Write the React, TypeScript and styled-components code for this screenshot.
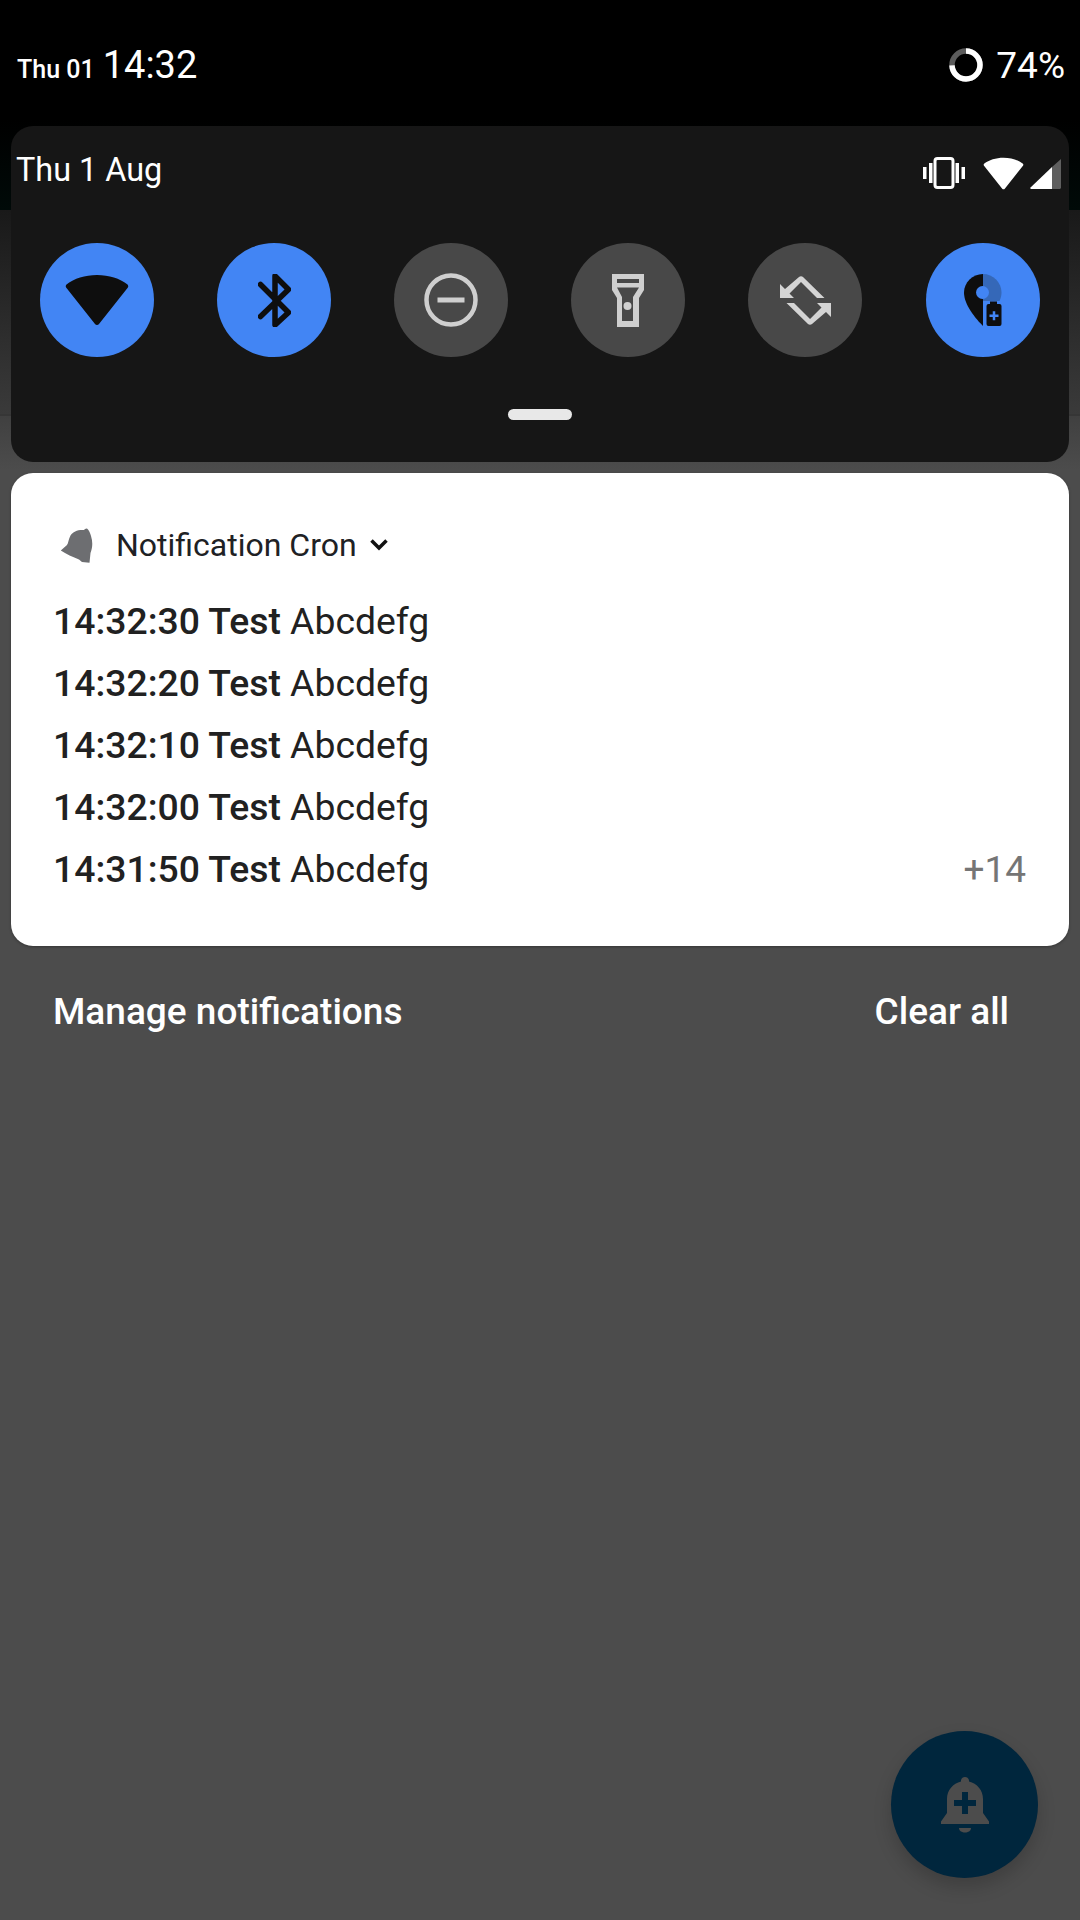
import { FC } from "react";
import styled, { createGlobalStyle } from "styled-components";

const GlobalStyle = createGlobalStyle`
  html, body {
    margin: 0;
    padding: 0;
    background: #4c4c4c;
  }
  * {
    box-sizing: border-box;
  }
`;

const Screen = styled.div`
  position: relative;
  width: 1080px;
  height: 1920px;
  overflow: hidden;
  font-family: Roboto, "Liberation Sans", sans-serif;
  background: linear-gradient(
    to bottom,
    #000 0,
    #000 120px,
    #000a08 210px,
    #191919 210px,
    #3a3a3a 414px,
    #363636 414px,
    #363636 416px,
    #404040 416px,
    #4c4c4c 470px
  );
`;

const StatusBar = styled.header`
  height: 126px;
  padding: 4px 15px 0 17px;
  display: flex;
  align-items: center;
  justify-content: space-between;
  color: #fff;
`;

const Clock = styled.div`
  display: flex;
  align-items: baseline;
  gap: 8px;
  font-size: 38px;
`;

const ClockDate = styled.span`
  font-size: 25px;
  font-weight: 500;
`;

const BatteryWrap = styled.div`
  display: flex;
  align-items: center;
  gap: 13px;
  font-size: 37px;
`;

const QuickPanel = styled.section`
  margin: 0 11px;
  height: 336px;
  background: #161616;
  border-radius: 22px;
  color: #fff;
  display: flex;
  flex-direction: column;
`;

const PanelTop = styled.div`
  height: 88px;
  padding: 0 8px 0 5px;
  display: flex;
  align-items: center;
  justify-content: space-between;
  font-size: 32.4px;
`;

const PanelIcons = styled.div`
  padding-top: 6px;
  display: flex;
  align-items: center;
  gap: 18px;
`;

const SignalIcon = styled.svg`
  margin-left: -12px;
`;

const TileRow = styled.div`
  margin-top: 29px;
  padding: 0 29px;
  display: flex;
  gap: 63px;
`;

const Tile = styled.div<{ $on?: boolean }>`
  width: 114px;
  height: 114px;
  border-radius: 50%;
  display: flex;
  align-items: center;
  justify-content: center;
  background: ${(p) => (p.$on ? "#4285f4" : "#484848")};

  &:last-child {
    margin-left: 1px;
  }
`;

const Handle = styled.div`
  width: 64px;
  height: 11px;
  margin: 52px auto 0;
  border-radius: 6px;
  background: #e8e8e8;
`;

const NotifCard = styled.section`
  margin: 11px 11px 0;
  height: 473px;
  background: #fff;
  border-radius: 22px;
  padding: 36px 43px 0 42px;
  box-shadow: 0 1px 3px rgba(0, 0, 0, 0.3);
`;

const AppRow = styled.div`
  height: 72px;
  display: flex;
  align-items: center;
  color: #202124;
  font-size: 32px;
`;

const AppIcon = styled.svg`
  margin-left: 7px;
  margin-right: 23px;
  display: block;
`;

const Chevron = styled.svg`
  margin-left: 13px;
  display: block;
`;

const MessageList = styled.div`
  margin-top: 9px;
  display: flex;
  flex-direction: column;
`;

const MessageRow = styled.div`
  height: 62px;
  display: flex;
  align-items: center;
  justify-content: space-between;
  font-size: 37.3px;
  color: #212121;
`;

const Sender = styled.b`
  font-weight: 500;
`;

const MoreCount = styled.span`
  font-size: 37px;
  color: #757575;
`;

const Footer = styled.div`
  height: 131px;
  padding: 0 71px 0 53px;
  display: flex;
  align-items: center;
  justify-content: space-between;
  color: #fff;
  font-size: 37px;
  font-weight: 500;
`;

const Fab = styled.div`
  position: absolute;
  left: 891px;
  top: 1731px;
  width: 147px;
  height: 147px;
  border-radius: 50%;
  background: #00263d;
  display: flex;
  align-items: center;
  justify-content: center;
  box-shadow: 0 9px 18px rgba(0, 0, 0, 0.18);
`;

const WifiGlyph: FC<{ w: number; h: number; color: string }> = ({ w, h, color }) => (
  <svg width={w} height={h} viewBox="0 0 64 52">
    <path
      d="M32 1C20 1 9 4.500 1.800 10.300C.6 11.300.4 12.700 1.300 13.800L30 50C31 51.300 33 51.300 34 50L62.700 13.800C63.600 12.700 63.400 11.300 62.200 10.300C55 4.500 44 1 32 1Z"
      fill={color}
    />
  </svg>
);

const statements = ["14:32:30", "14:32:20", "14:32:10", "14:32:00", "14:31:50"];

const rotateArm =
  "M0 9V23H14L9.500 18.500L21 7L37 23H44.500L23 2C22 1 20 1 19 2L5 14Z";

export default function App() {
  return (
    <Screen>
      <GlobalStyle />
      <StatusBar>
        <Clock>
          <ClockDate>Thu 01</ClockDate>
          <span>14:32</span>
        </Clock>
        <BatteryWrap>
          <svg width="34" height="34" viewBox="0 0 34 34">
            <circle cx="17" cy="17" r="14" fill="none" stroke="#5c5c5c" strokeWidth="5.500" />
            <circle
              cx="17"
              cy="17"
              r="14"
              fill="none"
              stroke="#fff"
              strokeWidth="5.500"
              strokeDasharray="65.100 87.960"
              transform="rotate(-90 17 17)"
            />
          </svg>
          <span>74%</span>
        </BatteryWrap>
      </StatusBar>

      <QuickPanel>
        <PanelTop>
          <span>Thu 1 Aug</span>
          <PanelIcons>
            <svg width="42" height="32" viewBox="0 0 42 32">
              <rect x="12" y="1.500" width="18" height="29" rx="2.500" fill="none" stroke="#fff" strokeWidth="3" />
              <rect x="6" y="6" width="3.500" height="20" fill="#fff" />
              <rect x="32.500" y="6" width="3.500" height="20" fill="#fff" />
              <rect x="0" y="10" width="3.500" height="12" fill="#fff" />
              <rect x="38.500" y="10" width="3.500" height="12" fill="#fff" />
            </svg>
            <WifiGlyph w={41} h={33} color="#fff" />
            <SignalIcon width="31" height="31" viewBox="0 0 31 31">
              <path d="M31 1V30L30 31H22V9Z" fill="#5f5f5f" />
              <path d="M22 9V31H1L0 30Z" fill="#fff" />
            </SignalIcon>
          </PanelIcons>
        </PanelTop>

        <TileRow>
          <Tile $on>
            <WifiGlyph w={64} h={52} color="#0e0e0e" />
          </Tile>
          <Tile $on>
            <svg width="33" height="53" viewBox="0 0 33 53">
              <path
                d="M2.500 10.500L30.500 38.500L17 51V2L30.500 15.500L2.500 42.500"
                fill="none"
                stroke="#0e0e0e"
                strokeWidth="5.500"
                strokeLinecap="round"
                strokeLinejoin="round"
              />
            </svg>
          </Tile>
          <Tile>
            <svg width="54" height="54" viewBox="0 0 54 54">
              <circle cx="27" cy="27" r="24.500" fill="none" stroke="#cfcfcf" strokeWidth="4.500" />
              <rect x="13.500" y="24.500" width="27" height="5" fill="#cfcfcf" />
            </svg>
          </Tile>
          <Tile>
            <svg width="32" height="53" viewBox="0 0 32 53">
              <path
                d="M0 0H32V16L27 24V53H5V24L0 16Z M5 5V9H27V5Z M5 13.500L10 23V47H21V23L27 13.500Z"
                fill="#cfcfcf"
                fillRule="evenodd"
              />
              <circle cx="15.500" cy="32" r="4" fill="#cfcfcf" />
            </svg>
          </Tile>
          <Tile>
            <svg width="51" height="51" viewBox="0 0 51 51">
              <path d={rotateArm} fill="#d4d4d4" />
              <path d={rotateArm} fill="#d4d4d4" transform="rotate(180 25.500 25.500)" />
            </svg>
          </Tile>
          <Tile $on>
            <svg width="38" height="53" viewBox="0 0 38 53">
              <path d="M19 0A18.500 18.500 0 0 1 37.500 18.500C37.500 21 37 24 35.500 27H19Z" fill="#3568b8" />
              <path d="M19 0C8.500 0 0 8.500 0 18.500C0 31 12 45 19 52Z" fill="#0e0e0e" />
              <circle cx="18.500" cy="18.500" r="6.500" fill="#4285f4" />
              <path
                d="M26 27.500H33V30H35.500A2 2 0 0 1 37.500 32V50A2 2 0 0 1 35.500 52H24.500A2 2 0 0 1 22.500 50V32A2 2 0 0 1 24.500 30H26Z"
                fill="#0e0e0e"
              />
              <path d="M25.500 41.700H34.500M30 37.200V46.200" stroke="#4285f4" strokeWidth="2.500" />
            </svg>
          </Tile>
        </TileRow>
        <Handle />
      </QuickPanel>

      <NotifCard>
        <AppRow>
          <AppIcon width="33" height="35" viewBox="0 0 33 35">
            <path
              d="M24 2C25 .5 27 -.5 28 1.500C29.500 3.500 30.500 6 31 8C33 14 32.500 20 30.500 25L29.500 34.700L22 34L19 31.500C13 29 6 26 .8 22.500L7 17C8.500 15 8.500 11 10.500 7.500C13 3.500 18 1.500 24 2Z"
              fill="#6d6e71"
            />
          </AppIcon>
          Notification Cron
          <Chevron width="18" height="12" viewBox="0 0 18 12">
            <path d="M1.500 1.500L9 9L16.500 1.500" fill="none" stroke="#111" strokeWidth="3.500" />
          </Chevron>
        </AppRow>
        <MessageList>
          {statements.map((time, i) => (
            <MessageRow key={time}>
              <span>
                <Sender>{time} Test</Sender> Abcdefg
              </span>
              {i === 4 && <MoreCount>+14</MoreCount>}
            </MessageRow>
          ))}
        </MessageList>
      </NotifCard>

      <Footer>
        <span>Manage notifications</span>
        <span>Clear all</span>
      </Footer>

      <Fab>
        <svg width="48" height="56" viewBox="0 0 48 56">
          <path
            d="M24 0C26.500 0 28.200 2 28 4.500C36 6.500 42 13 42 22V36L48 44.500V47H0V44.500L6 36V22C6 13 12 6.500 20 4.500C19.800 2 21.500 0 24 0Z"
            fill="#4c4c4c"
          />
          <path d="M18 51H30C30 54 27 55.500 24 55.500C21 55.500 18 54 18 51Z" fill="#4c4c4c" />
          <path d="M21 15H27V23H35V29H27V37H21V29H13V23H21Z" fill="#00263d" />
        </svg>
      </Fab>
    </Screen>
  );
}
